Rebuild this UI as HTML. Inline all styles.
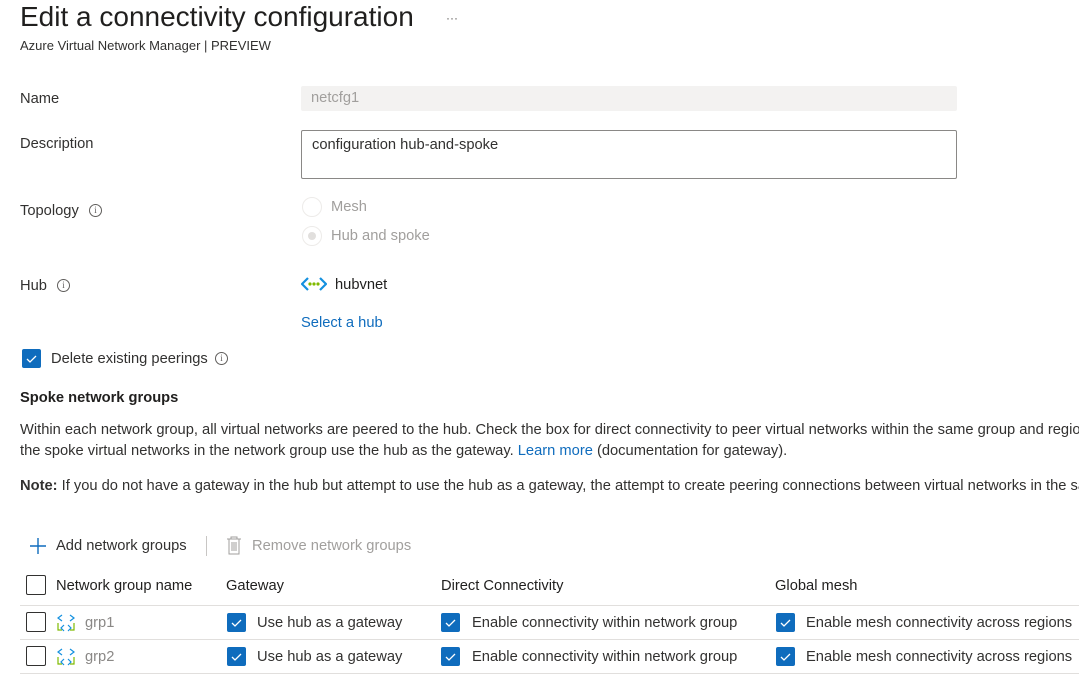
<!DOCTYPE html>
<html><head><meta charset="utf-8"><style>
*{margin:0;padding:0;box-sizing:border-box}
body{width:1079px;height:679px;overflow:hidden;background:#fff;font-family:"Liberation Sans",sans-serif;color:#323130;font-size:14.7px;line-height:19px;position:relative}
.a{position:absolute;white-space:nowrap}
.cb{position:absolute;width:20px;height:20px;border:1px solid #323130;border-radius:2px;background:#fff}
.cc{position:absolute;width:19px;height:19px;background:#0f6cbd;border-radius:2px}
.cc svg{position:absolute;left:3px;top:3px}
.info{position:absolute;width:13px;height:13px;border:1px solid #605e5c;border-radius:50%;font-size:9px;text-align:center;line-height:11px;color:#605e5c;font-family:"Liberation Serif",serif}
.line{position:absolute;left:20px;right:0;height:1px;background:#e1dfdd}
.lnk{color:#0f6cbd}
</style></head><body>
<div class="a" style="left:20px;top:0px;font-size:28px;line-height:34px;color:#201f1e">Edit a connectivity configuration</div>
<div class="a" style="left:446px;top:9px;font-size:12px;color:#605e5c">···</div>
<div class="a" style="left:20px;top:36px;font-size:13px">Azure Virtual Network Manager | PREVIEW</div>

<div class="a" style="left:20px;top:90px">Name</div>
<div class="a" style="left:301px;top:86px;width:656px;height:25px;background:#f3f2f1;border-radius:2px;padding:3px 10px;color:#a19f9d">netcfg1</div>

<div class="a" style="left:20px;top:135px">Description</div>
<div class="a" style="left:301px;top:130px;width:656px;height:49px;border:1px solid #8a8886;border-radius:2px;padding:5px 10px">configuration hub-and-spoke</div>

<div class="a" style="left:20px;top:202px">Topology</div>
<div class="info" style="left:89px;top:204px">i</div>
<div class="a" style="left:302px;top:197px;width:20px;height:20px;border:1px solid #edebe9;border-radius:50%"></div>
<div class="a" style="left:331px;top:198px;color:#a19f9d">Mesh</div>
<div class="a" style="left:302px;top:226px;width:20px;height:20px;border:1px solid #edebe9;border-radius:50%"><div style="position:absolute;left:5px;top:5px;width:8px;height:8px;border-radius:50%;background:#e1dfdd"></div></div>
<div class="a" style="left:331px;top:227px;color:#a19f9d">Hub and spoke</div>

<div class="a" style="left:20px;top:277px">Hub</div>
<div class="info" style="left:57px;top:279px">i</div>
<svg class="a" style="left:301px;top:277px" width="26" height="14" viewBox="0 0 26 14"><path d="M7 1L1 7l6 6" stroke="#1490df" stroke-width="2.2" fill="none"/><path d="M19 1l6 6-6 6" stroke="#1490df" stroke-width="2.2" fill="none"/><circle cx="9" cy="7" r="1.6" fill="#7fba00"/><circle cx="13" cy="7" r="1.6" fill="#7fba00"/><circle cx="17" cy="7" r="1.6" fill="#7fba00"/></svg>
<div class="a" style="left:335px;top:276px;color:#201f1e">hubvnet</div>
<div class="a lnk" style="left:301px;top:314px">Select a hub</div>

<div class="cc" style="left:22px;top:349px"><svg width="13" height="13"><path d="M2 7l3 3 6-6" stroke="#fff" stroke-width="1.3" fill="none"/></svg></div>
<div class="a" style="left:51px;top:350px">Delete existing peerings</div>
<div class="info" style="left:215px;top:352px">i</div>

<div class="a" style="left:20px;top:389px;font-weight:bold;color:#201f1e">Spoke network groups</div>
<div class="a" style="left:20px;top:421px">Within each network group, all virtual networks are peered to the hub. Check the box for direct connectivity to peer virtual networks within the same group and region.</div>
<div class="a" style="left:20px;top:442px">the spoke virtual networks in the network group use the hub as the gateway. <span class="lnk">Learn more</span> (documentation for gateway).</div>
<div class="a" style="left:20px;top:477px"><b>Note:</b> If you do not have a gateway in the hub but attempt to use the hub as a gateway, the attempt to create peering connections between virtual networks in the same</div>

<svg class="a" style="left:29px;top:537px" width="18" height="18"><path d="M9 1v16M1 9h16" stroke="#0f6cbd" stroke-width="1.4"/></svg>
<div class="a" style="left:56px;top:537px">Add network groups</div>
<div class="a" style="left:206px;top:536px;width:1px;height:20px;background:#c8c6c4"></div>
<svg class="a" style="left:226px;top:536px" width="16" height="19"><path d="M1 3h14M5 3V1h6v2M3 3v15h10V3M6 6v9M8 6v9M10 6v9" stroke="#a19f9d" stroke-width="1" fill="none"/></svg>
<div class="a" style="left:252px;top:537px;color:#a19f9d">Remove network groups</div>

<div class="cb" style="left:26px;top:575px"></div>
<div class="a" style="left:56px;top:577px;color:#201f1e">Network group name</div>
<div class="a" style="left:226px;top:577px;color:#201f1e">Gateway</div>
<div class="a" style="left:441px;top:577px;color:#201f1e">Direct Connectivity</div>
<div class="a" style="left:775px;top:577px;color:#201f1e">Global mesh</div>
<div class="line" style="top:605px"></div>

<div class="cb" style="left:26px;top:612px"></div>
<svg class="a" style="left:56px;top:613px" width="20" height="20"><path d="M6 2L2 5l4 3M14 2l4 3-4 3" stroke="#1490df" stroke-width="1.2" fill="none"/><path d="M2 10v7h4M18 10v7h-4" stroke="#7fba00" stroke-width="1.2" fill="none"/><path d="M8 12l-3 3 3 3M12 12l3 3-3 3" stroke="#1490df" stroke-width="1.2" fill="none"/></svg>
<div class="a" style="left:85px;top:614px;color:#8a8886">grp1</div>
<div class="cc" style="left:227px;top:613px"><svg width="13" height="13"><path d="M2 7l3 3 6-6" stroke="#fff" stroke-width="1.3" fill="none"/></svg></div>
<div class="a" style="left:257px;top:614px">Use hub as a gateway</div>
<div class="cc" style="left:441px;top:613px"><svg width="13" height="13"><path d="M2 7l3 3 6-6" stroke="#fff" stroke-width="1.3" fill="none"/></svg></div>
<div class="a" style="left:472px;top:614px">Enable connectivity within network group</div>
<div class="cc" style="left:776px;top:613px"><svg width="13" height="13"><path d="M2 7l3 3 6-6" stroke="#fff" stroke-width="1.3" fill="none"/></svg></div>
<div class="a" style="left:806px;top:614px">Enable mesh connectivity across regions</div>
<div class="line" style="top:639px"></div>

<div class="cb" style="left:26px;top:646px"></div>
<svg class="a" style="left:56px;top:647px" width="20" height="20"><path d="M6 2L2 5l4 3M14 2l4 3-4 3" stroke="#1490df" stroke-width="1.2" fill="none"/><path d="M2 10v7h4M18 10v7h-4" stroke="#7fba00" stroke-width="1.2" fill="none"/><path d="M8 12l-3 3 3 3M12 12l3 3-3 3" stroke="#1490df" stroke-width="1.2" fill="none"/></svg>
<div class="a" style="left:85px;top:648px;color:#8a8886">grp2</div>
<div class="cc" style="left:227px;top:647px"><svg width="13" height="13"><path d="M2 7l3 3 6-6" stroke="#fff" stroke-width="1.3" fill="none"/></svg></div>
<div class="a" style="left:257px;top:648px">Use hub as a gateway</div>
<div class="cc" style="left:441px;top:647px"><svg width="13" height="13"><path d="M2 7l3 3 6-6" stroke="#fff" stroke-width="1.3" fill="none"/></svg></div>
<div class="a" style="left:472px;top:648px">Enable connectivity within network group</div>
<div class="cc" style="left:776px;top:647px"><svg width="13" height="13"><path d="M2 7l3 3 6-6" stroke="#fff" stroke-width="1.3" fill="none"/></svg></div>
<div class="a" style="left:806px;top:648px">Enable mesh connectivity across regions</div>
<div class="line" style="top:673px"></div>
</body></html>
